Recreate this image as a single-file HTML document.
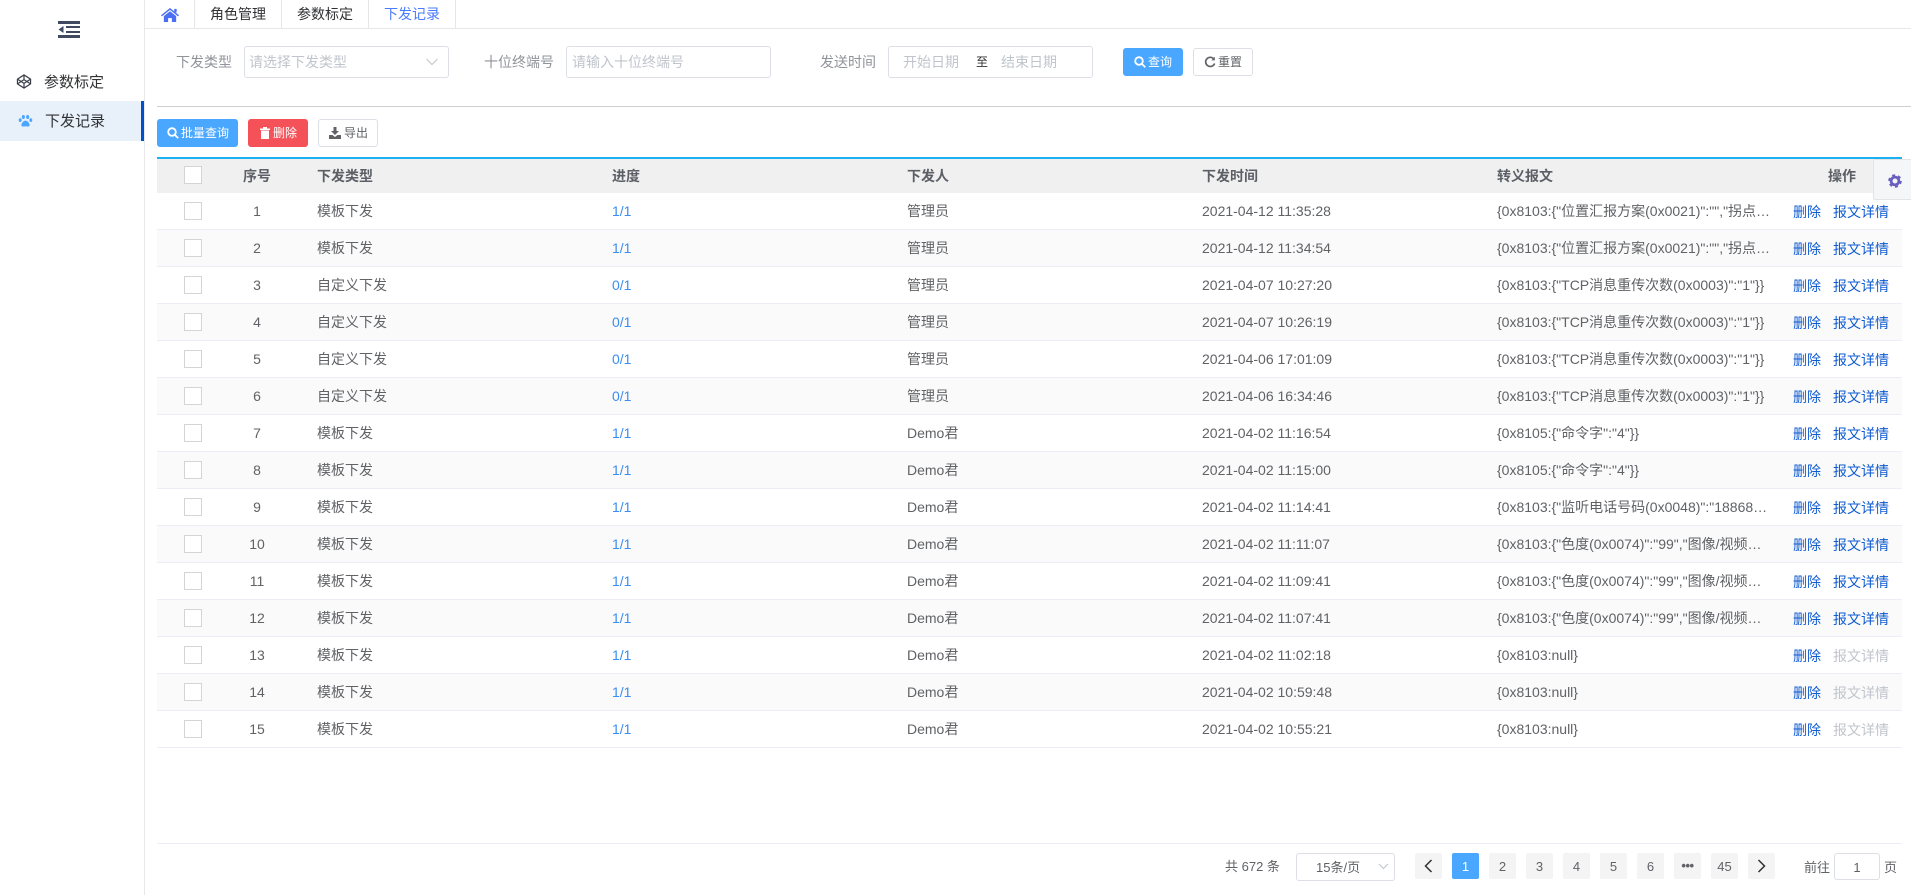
<!DOCTYPE html>
<html lang="zh-CN">
<head>
<meta charset="utf-8">
<title>下发记录</title>
<style>
*{box-sizing:border-box}
html,body{margin:0;padding:0;width:1911px;height:895px;overflow:hidden;background:#fff}
body{position:relative;font-family:"Liberation Sans","Noto Sans CJK SC",sans-serif;font-size:14px;color:#606266}
.a,.r,.r span,.r i,.r b{position:absolute;white-space:nowrap}
svg{position:absolute;display:block}
.tab{position:absolute;top:0;height:28px;line-height:28px;font-size:14px;color:#303133;text-align:center;border-right:1px solid #e6e6e6}
.box{position:absolute;border:1px solid #dcdfe6;border-radius:3px;background:#fff}
.lbl{position:absolute;line-height:32px;top:46px;color:#909399}
.ph{position:absolute;color:#c0c4cc;line-height:32px;top:46px}
.btn{position:absolute;height:28px;line-height:26px;font-size:12px;border-radius:3px;border:1px solid #dcdfe6;color:#606266;background:#fff}
.btn.p{background:#49a7ff;border-color:#49a7ff;color:#fff}
.btn.d{background:#f45258;border-color:#f45258;color:#fff}
.btn em{position:absolute;font-style:normal;top:0}
.r{left:157px;width:1745px;height:37px;border-bottom:1px solid #ebeef5;line-height:36px;background:#fff}
.r.e{background:#fafafa}
.r.h{top:159px;height:34px;background:#f0f0f0;border:0;line-height:34px;font-weight:bold;color:#5c5f66}
.r i{left:27px;top:9px;width:18px;height:18px;background:#fff;border:1.5px solid #d4d4d4}
.r.h i{top:7px}
.n{left:60px;width:80px;text-align:center}
.t{left:160px}
.p1{left:455px;color:#3c8df0}
.u{left:750px}
.m{left:1045px}
.c{left:1340px;max-width:272px;overflow:hidden}
.x{left:1636px;top:1px;color:#0f5bd0}
.y{left:1676px;top:1px;color:#0f5bd0}
.y.o{color:#c0c4cc}
.pg{position:absolute;top:853px;width:27px;height:26px;line-height:28px;background:#f4f4f5;border-radius:2px;text-align:center;font-size:13px;color:#606266}
.pg.on{background:#49a7ff;color:#fff}
</style>
</head>
<body>
<!-- sidebar -->
<div class="a" style="left:144px;top:0;width:1px;height:895px;background:#e8e8e8"></div>
<svg style="left:58px;top:21px" width="22" height="17" viewBox="0 0 22 17"><g fill="#3f4a60"><rect x="0" y="0" width="22" height="3"/><rect x="8" y="5" width="14" height="2"/><rect x="8" y="10" width="14" height="2"/><rect x="0" y="14" width="22" height="3"/><path d="M5.500 5 0.500 8.500 5.500 12z"/></g></svg>
<svg style="left:16px;top:74px" width="16" height="15" viewBox="0 0 16 16" fill="none" stroke="#3a3f4a" stroke-width="1.300" stroke-linejoin="round"><path d="M8 1 15 5.500v5L8 15 1 10.500v-5z"/><path d="M1 5.500 8 10l7-4.500M1 10.500 8 6l7 4.500M8 1v5M8 10v5"/></svg>
<div class="a" style="left:44px;top:72px;line-height:22px;font-size:15px;color:#303133">参数标定</div>
<div class="a" style="left:0;top:101px;width:144px;height:40px;background:#e8f0fa"></div>
<div class="a" style="left:141px;top:101px;width:3px;height:40px;background:#0050c8"></div>
<svg style="left:18px;top:115px" width="15" height="12" viewBox="0 0 16 14" fill="#4aa6ff"><ellipse cx="1.800" cy="6" rx="1.700" ry="2.200"/><ellipse cx="5.500" cy="2.300" rx="1.800" ry="2.300"/><ellipse cx="10.500" cy="2.300" rx="1.800" ry="2.300"/><ellipse cx="14.200" cy="6" rx="1.700" ry="2.200"/><path d="M8 6.500c2.300 0 4.800 3 4.800 5.300 0 2-2 1.900-4.800 1.300-2.800.6-4.800.7-4.800-1.300C3.200 9.500 5.700 6.500 8 6.500z"/></svg>
<div class="a" style="left:45px;top:111px;line-height:22px;font-size:15px;color:#303133">下发记录</div>

<!-- tabs -->
<div class="a" style="left:145px;top:28px;width:1766px;height:1px;background:#e8e8e8"></div>
<div class="tab" style="left:145px;width:50px"></div>
<svg style="left:161px;top:8px" width="18" height="14" viewBox="0 0 19 16" preserveAspectRatio="none" fill="#4a6ff5"><path d="M9.500 0 19 8.300l-1 1.200-8.500-7.400L1 9.500 0 8.300z"/><path d="M3 9.300 9.500 3.700 16 9.300V16h-4.500v-4.500h-4V16H3z"/><rect x="14" y="1" width="2.500" height="4"/></svg>
<div class="tab" style="left:195px;width:87px">角色管理</div>
<div class="tab" style="left:282px;width:87px">参数标定</div>
<div class="tab" style="left:369px;width:87px;color:#4a7bff">下发记录</div>

<!-- filter -->
<div class="lbl" style="left:176px">下发类型</div>
<div class="box" style="left:244px;top:46px;width:205px;height:32px"></div>
<div class="ph" style="left:249px">请选择下发类型</div>
<svg style="left:425px;top:58px" width="14" height="8" viewBox="0 0 14 8" fill="none" stroke="#c0c4cc" stroke-width="1"><path d="M1.500 1 7 6.500 12.500 1"/></svg>
<div class="lbl" style="left:484px">十位终端号</div>
<div class="box" style="left:566px;top:46px;width:205px;height:32px"></div>
<div class="ph" style="left:572px">请输入十位终端号</div>
<div class="lbl" style="left:820px">发送时间</div>
<div class="box" style="left:888px;top:46px;width:205px;height:32px"></div>
<div class="ph" style="left:903px">开始日期</div>
<div class="a" style="left:976px;top:46px;line-height:32px;font-size:12px;color:#303133">至</div>
<div class="ph" style="left:1001px">结束日期</div>
<div class="btn p" style="left:1123px;top:48px;width:60px"><em style="left:24px">查询</em></div>
<svg style="left:1134px;top:56px" width="12" height="12" viewBox="0 0 12 12" fill="none" stroke="#fff" stroke-width="1.800"><circle cx="5" cy="5" r="3.800"/><path d="M8 8l3.200 3.200"/></svg>
<div class="btn" style="left:1193px;top:48px;width:60px"><em style="left:24px">重置</em></div>
<svg style="left:1204px;top:56px" width="12" height="12" viewBox="0 0 12 12" fill="none" stroke="#606266" stroke-width="1.700"><path d="M10 3.200A4.600 4.600 0 1 0 10.600 7.500"/><path d="M10.800 .8v3.600H7.300z" fill="#606266" stroke="none"/></svg>
<div class="a" style="left:157px;top:106px;width:1754px;height:1px;background:#cfcfcf"></div>

<!-- actions -->
<div class="btn p" style="left:157px;top:119px;width:81px"><em style="left:23px">批量查询</em></div>
<svg style="left:167px;top:127px" width="12" height="12" viewBox="0 0 12 12" fill="none" stroke="#fff" stroke-width="1.800"><circle cx="5" cy="5" r="3.800"/><path d="M8 8l3.200 3.200"/></svg>
<div class="btn d" style="left:248px;top:119px;width:60px"><em style="left:24px">删除</em></div>
<svg style="left:260px;top:127px" width="10" height="12" viewBox="0 0 10 12" fill="#fff"><rect x="0" y="1.500" width="10" height="1.500"/><rect x="3" y="0" width="4" height="2"/><path d="M1 3.500h8V12H1z"/></svg>
<div class="btn" style="left:318px;top:119px;width:60px"><em style="left:25px">导出</em></div>
<svg style="left:329px;top:127px" width="12" height="12" viewBox="0 0 12 12" fill="#606266"><path d="M4.500 0h3v4H10L6 8 2 4h2.500z"/><path d="M0 8h3.500L6 10l2.500-2H12v4H0z"/></svg>

<!-- table -->
<div class="a" style="left:157px;top:157px;width:1745px;height:2px;background:#1ab1f2"></div>
<div class="r h"><i></i><span class="n">序号</span><span class="t">下发类型</span><span class="p1" style="color:#5c5f66">进度</span><span class="u">下发人</span><span class="m">下发时间</span><span class="c">转义报文</span><span style="left:1671px">操作</span></div>

<div class="r" style="top:193px"><i></i><span class="n">1</span><span class="t">模板下发</span><span class="p1">1/1</span><span class="u">管理员</span><span class="m">2021-04-12 11:35:28</span><span class="c">{0x8103:{"位置汇报方案(0x0021)":"","拐点…</span><span class="x">删除</span><span class="y">报文详情</span></div>
<div class="r e" style="top:230px"><i></i><span class="n">2</span><span class="t">模板下发</span><span class="p1">1/1</span><span class="u">管理员</span><span class="m">2021-04-12 11:34:54</span><span class="c">{0x8103:{"位置汇报方案(0x0021)":"","拐点…</span><span class="x">删除</span><span class="y">报文详情</span></div>
<div class="r" style="top:267px"><i></i><span class="n">3</span><span class="t">自定义下发</span><span class="p1">0/1</span><span class="u">管理员</span><span class="m">2021-04-07 10:27:20</span><span class="c">{0x8103:{"TCP消息重传次数(0x0003)":"1"}}</span><span class="x">删除</span><span class="y">报文详情</span></div>
<div class="r e" style="top:304px"><i></i><span class="n">4</span><span class="t">自定义下发</span><span class="p1">0/1</span><span class="u">管理员</span><span class="m">2021-04-07 10:26:19</span><span class="c">{0x8103:{"TCP消息重传次数(0x0003)":"1"}}</span><span class="x">删除</span><span class="y">报文详情</span></div>
<div class="r" style="top:341px"><i></i><span class="n">5</span><span class="t">自定义下发</span><span class="p1">0/1</span><span class="u">管理员</span><span class="m">2021-04-06 17:01:09</span><span class="c">{0x8103:{"TCP消息重传次数(0x0003)":"1"}}</span><span class="x">删除</span><span class="y">报文详情</span></div>
<div class="r e" style="top:378px"><i></i><span class="n">6</span><span class="t">自定义下发</span><span class="p1">0/1</span><span class="u">管理员</span><span class="m">2021-04-06 16:34:46</span><span class="c">{0x8103:{"TCP消息重传次数(0x0003)":"1"}}</span><span class="x">删除</span><span class="y">报文详情</span></div>
<div class="r" style="top:415px"><i></i><span class="n">7</span><span class="t">模板下发</span><span class="p1">1/1</span><span class="u">Demo君</span><span class="m">2021-04-02 11:16:54</span><span class="c">{0x8105:{"命令字":"4"}}</span><span class="x">删除</span><span class="y">报文详情</span></div>
<div class="r e" style="top:452px"><i></i><span class="n">8</span><span class="t">模板下发</span><span class="p1">1/1</span><span class="u">Demo君</span><span class="m">2021-04-02 11:15:00</span><span class="c">{0x8105:{"命令字":"4"}}</span><span class="x">删除</span><span class="y">报文详情</span></div>
<div class="r" style="top:489px"><i></i><span class="n">9</span><span class="t">模板下发</span><span class="p1">1/1</span><span class="u">Demo君</span><span class="m">2021-04-02 11:14:41</span><span class="c">{0x8103:{"监听电话号码(0x0048)":"18868…</span><span class="x">删除</span><span class="y">报文详情</span></div>
<div class="r e" style="top:526px"><i></i><span class="n">10</span><span class="t">模板下发</span><span class="p1">1/1</span><span class="u">Demo君</span><span class="m">2021-04-02 11:11:07</span><span class="c">{0x8103:{"色度(0x0074)":"99","图像/视频…</span><span class="x">删除</span><span class="y">报文详情</span></div>
<div class="r" style="top:563px"><i></i><span class="n">11</span><span class="t">模板下发</span><span class="p1">1/1</span><span class="u">Demo君</span><span class="m">2021-04-02 11:09:41</span><span class="c">{0x8103:{"色度(0x0074)":"99","图像/视频…</span><span class="x">删除</span><span class="y">报文详情</span></div>
<div class="r e" style="top:600px"><i></i><span class="n">12</span><span class="t">模板下发</span><span class="p1">1/1</span><span class="u">Demo君</span><span class="m">2021-04-02 11:07:41</span><span class="c">{0x8103:{"色度(0x0074)":"99","图像/视频…</span><span class="x">删除</span><span class="y">报文详情</span></div>
<div class="r" style="top:637px"><i></i><span class="n">13</span><span class="t">模板下发</span><span class="p1">1/1</span><span class="u">Demo君</span><span class="m">2021-04-02 11:02:18</span><span class="c">{0x8103:null}</span><span class="x">删除</span><span class="y o">报文详情</span></div>
<div class="r e" style="top:674px"><i></i><span class="n">14</span><span class="t">模板下发</span><span class="p1">1/1</span><span class="u">Demo君</span><span class="m">2021-04-02 10:59:48</span><span class="c">{0x8103:null}</span><span class="x">删除</span><span class="y o">报文详情</span></div>
<div class="r" style="top:711px"><i></i><span class="n">15</span><span class="t">模板下发</span><span class="p1">1/1</span><span class="u">Demo君</span><span class="m">2021-04-02 10:55:21</span><span class="c">{0x8103:null}</span><span class="x">删除</span><span class="y o">报文详情</span></div>

<!-- gear tab -->
<div class="a" style="left:1873px;top:159px;width:38px;height:41px;background:#f5f6f7;border:1px solid #e4e4e4;border-right:0;border-radius:2px 0 0 2px"></div>
<svg style="left:1888px;top:174px" width="14" height="14" viewBox="0 0 14 14"><circle cx="7" cy="7" r="3.900" fill="none" stroke="#6a5fc0" stroke-width="2.800"/><circle cx="7" cy="7" r="5.800" fill="none" stroke="#6a5fc0" stroke-width="2" stroke-dasharray="3 3.070"/></svg>

<!-- pagination -->
<div class="a" style="left:157px;top:843px;width:1745px;height:1px;background:#ebeef5"></div>
<div class="a" style="left:1225px;top:854px;line-height:26px;font-size:13px">共 672 条</div>
<div class="box" style="left:1296px;top:853px;width:99px;height:28px"></div>
<div class="a" style="left:1316px;top:854px;line-height:28px;font-size:13px">15条/页</div>
<svg style="left:1378px;top:863px" width="11" height="7" viewBox="0 0 11 7" fill="none" stroke="#c0c4cc"><path d="M1 1l4.500 4.500L10 1"/></svg>
<div class="pg" style="left:1415px"></div>
<svg style="left:1424px;top:859px" width="9" height="14" viewBox="0 0 9 14" fill="none" stroke="#303133" stroke-width="1.500"><path d="M7.500 1 1.500 7l6 6"/></svg>
<div class="pg on" style="left:1452px">1</div>
<div class="pg" style="left:1489px">2</div>
<div class="pg" style="left:1526px">3</div>
<div class="pg" style="left:1563px">4</div>
<div class="pg" style="left:1600px">5</div>
<div class="pg" style="left:1637px">6</div>
<div class="pg" style="left:1674px;font-weight:bold;letter-spacing:-.5px;line-height:26px">•••</div>
<div class="pg" style="left:1711px">45</div>
<div class="pg" style="left:1748px"></div>
<svg style="left:1757px;top:859px" width="9" height="14" viewBox="0 0 9 14" fill="none" stroke="#303133" stroke-width="1.500"><path d="M1.500 1l6 6-6 6"/></svg>
<div class="a" style="left:1804px;top:855px;line-height:26px;font-size:13px">前往</div>
<div class="box" style="left:1834px;top:853px;width:46px;height:27px;text-align:center;line-height:27px;font-size:13px">1</div>
<div class="a" style="left:1884px;top:855px;line-height:26px;font-size:13px">页</div>
</body>
</html>
